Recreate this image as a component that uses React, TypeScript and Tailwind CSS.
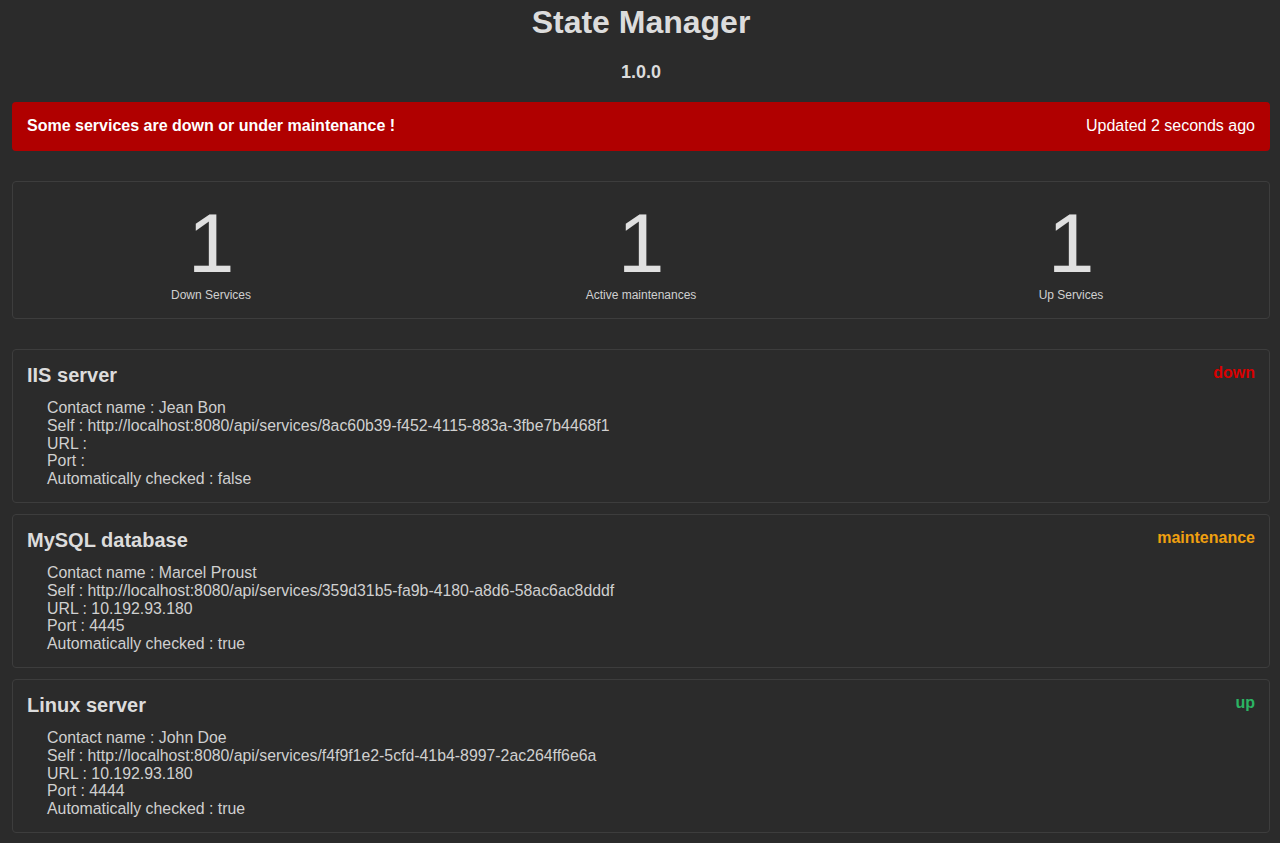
const services = [
  {
    name: "IIS server",
    status: "down",
    contact: "Jean Bon",
    self: "http://localhost:8080/api/services/8ac60b39-f452-4115-883a-3fbe7b4468f1",
    url: "",
    port: "",
    auto: "false",
  },
  {
    name: "MySQL database",
    status: "maintenance",
    contact: "Marcel Proust",
    self: "http://localhost:8080/api/services/359d31b5-fa9b-4180-a8d6-58ac6ac8dddf",
    url: "10.192.93.180",
    port: "4445",
    auto: "true",
  },
  {
    name: "Linux server",
    status: "up",
    contact: "John Doe",
    self: "http://localhost:8080/api/services/f4f9f1e2-5cfd-41b4-8997-2ac264ff6e6a",
    url: "10.192.93.180",
    port: "4444",
    auto: "true",
  },
];

const statusColor: Record<string, string> = {
  down: "text-[#d90000]",
  maintenance: "text-[#f0a010]",
  up: "text-[#2bb463]",
};

const stats = [
  { value: 1, label: "Down Services" },
  { value: 1, label: "Active maintenances" },
  { value: 1, label: "Up Services" },
];

const App = () => {
  return (
    <div className="min-h-screen w-full bg-[#2b2b2b] text-[#dcdcdc] font-['Liberation_Sans',Arial,sans-serif] pl-3 pr-[10px] pb-3">
      {/* Header */}
      <h1 className="pt-1 text-center text-[32px] leading-[37px] font-bold">State Manager</h1>
      <div className="mt-[21px] text-center text-[18px] leading-[21px] font-bold">1.0.0</div>

      {/* Global status banner */}
      <div className="mt-[19px] h-[49px] rounded bg-[#b00000] pl-[15px] pr-[15px] pb-[2px] flex items-center justify-between text-white text-base">
        <span className="font-bold">Some services are down or under maintenance !</span>
        <span>Updated 2 seconds ago</span>
      </div>

      {/* Counters */}
      <div className="mt-[30px] rounded border border-[#3d3d3d] overflow-hidden">
        <div className="-mx-[17px] grid grid-cols-3 pt-[19px] pb-[16px]">
          {stats.map((s) => (
            <div key={s.label} className="flex flex-col items-center">
              <div className="text-[84px] leading-none text-[#e0e0e0]">{s.value}</div>
              <div className="mt-[3px] text-xs leading-[14px] text-[#d0d0d0]">{s.label}</div>
            </div>
          ))}
        </div>
      </div>

      {/* Services */}
      <div className="mt-[30px] flex flex-col gap-[11px]">
        {services.map((s) => (
          <div key={s.name} className="rounded border border-[#3d3d3d] px-[14px] pt-[14px] pb-[14px]">
            <div className="flex items-start justify-between">
              <h2 className="text-[20px] leading-[23px] font-bold">{s.name}</h2>
              <span className={`-mt-[3px] text-base font-bold ${statusColor[s.status]}`}>{s.status}</span>
            </div>
            <ul className="mt-[12px] pl-5 text-[15.85px] leading-[17.8px] text-[#d0d0d0]">
              <li>Contact name : {s.contact}</li>
              <li>Self : {s.self}</li>
              <li>URL : {s.url}</li>
              <li>Port : {s.port}</li>
              <li>Automatically checked : {s.auto}</li>
            </ul>
          </div>
        ))}
      </div>
    </div>
  );
};

export default App;
